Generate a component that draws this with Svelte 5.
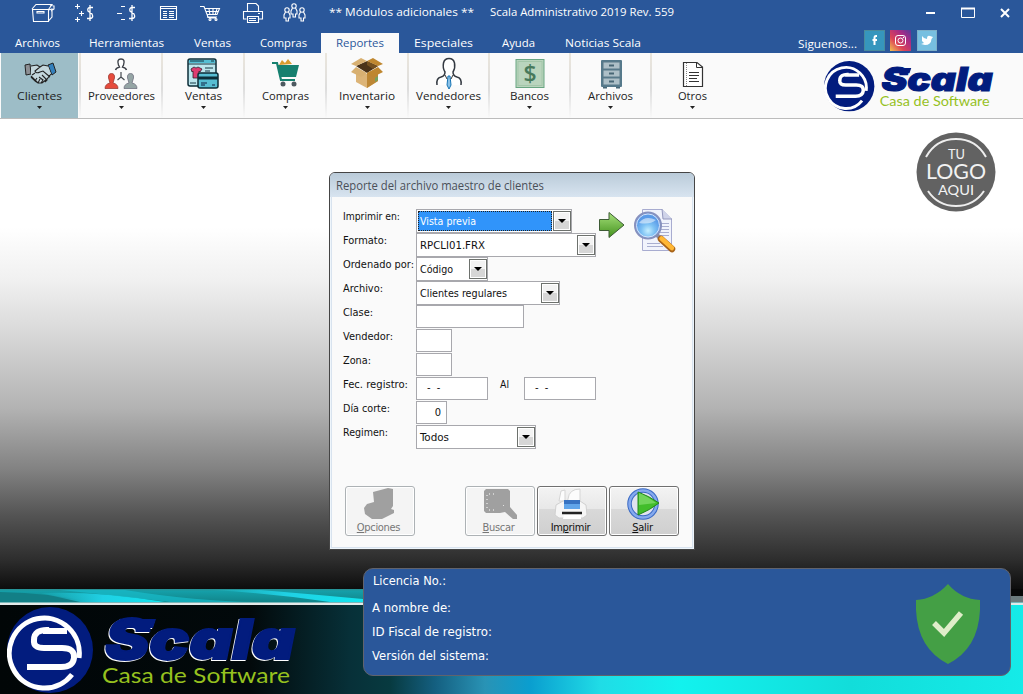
<script>
  const menus = [
    ['Archivos', 74, 45], ['Herramientas', 105, 75], ['Ventas', 67, 37], ['Compras', 75, 47],
    ['Reportes', 78, 48], ['Especiales', 89, 59], ['Ayuda', 61, 33], ['Noticias Scala', 108, 76]
  ];
  const tools = [
    ['Clientes', 'hands', 81, 45], ['Proveedores', 'tree', 82, 67], ['Ventas', 'card', 82, 37],
    ['Compras', 'cart', 82, 47], ['Inventario', 'box', 82, 56], ['Vendedores', 'man', 81, 65],
    ['Bancos', 'bank', 81, 39], ['Archivos', 'cabinet', 81, 45], ['Otros', 'doc', 81, 29]
  ];
  const rows = [
    { label: 'Imprimir en:', lw: 57, w: 156, value: 'Vista previa', vw: 56, combo: true, sel: true },
    { label: 'Formato:', lw: 44, w: 180, value: 'RPCLI01.FRX', vw: 65, combo: true },
    { label: 'Ordenado por:', lw: 71, w: 72, value: 'Código', vw: 33, combo: true },
    { label: 'Archivo:', lw: 40, w: 144, value: 'Clientes regulares', vw: 87, combo: true },
    { label: 'Clase:', lw: 30, w: 108 },
    { label: 'Vendedor:', lw: 50, w: 36 },
    { label: 'Zona:', lw: 28, w: 36 },
    { label: 'Fec. registro:', lw: 65, w: 72, date: true },
    { label: 'Día corte:', lw: 47, w: 31, num: true },
    { label: 'Regimen:', lw: 45, w: 120, value: 'Todos', vw: 29, combo: true }
  ];
</script>

{#snippet fit(t, w, size)}
  <svg class="fit" width={w} height="16" style:font-size="{size}px"><text x="0" y="12" textLength={w} lengthAdjust="spacingAndGlyphs">{t}</text></svg>
{/snippet}

{#snippet brand(w, outline)}
  <svg width={w} viewBox="0 0 292 88" class="brand">
    <circle cx="43" cy="43" r="43" fill="#021c7e" />
    <path d="M65 67.500A35 35 0 1 1 72 51" fill="none" stroke="#fff" stroke-width="5" />
    <path d="M60 24H36M42 23Q27 22 27 33Q26 41 37 41H55Q68 41 67 51Q66 60 54 60H20" fill="none" stroke="#fff" stroke-width="6" />
    <g class:outline font-family="Inter" font-weight="900" font-style="italic" font-size="55">
      <text x="98" y="52" textLength="190" lengthAdjust="spacingAndGlyphs" fill="#021c7e" stroke="#021c7e" stroke-width="1.800">Scala</text>
      <path d="M113 11L122 18L130 12H149L146 21H120Z" fill="#021c7e" />
    </g>
    <text x="95" y="76" textLength="188" lengthAdjust="spacingAndGlyphs" font-family="Lato" font-size="22" fill="#96c11f">Casa de Software</text>
  </svg>
{/snippet}

{#snippet toolIcon(n)}
  <svg class="ticon" width="34" height="34" viewBox="0 0 34 34">
    {#if n === 'hands'}
      <path d="M2 8L7 7L8 17L3 18Z" fill="#8d8f94" stroke="#222" />
      <path d="M25 8L30 6L33 15L29 18Z" fill="#3480bc" stroke="#222" />
      <path d="M8 9L14 8L17 10L20 8L25 9L28 17L24 22L19 26L15 26L8 19Z" fill="#c3d6dc" />
      <path d="M8 9L14 8L17 10L20 8L25 9M28 17L24 22L19 26L15 26L8 19M17 10L12 14Q13 17 17 15L20 14L27 20M9 18L12 16M8 20L12 24L14 21M12 24L15 26L17 22M18 26L20 23L16 20M22 25L24 23L19 18" fill="none" stroke="#222" stroke-width="1.100" />
    {:else if n === 'tree'}
      <path d="M11.500 13Q12 11 15.500 10L14.500 8Q12.500 2 17 2Q21.500 2 19.500 8L18.500 10Q22 11 22.500 13" fill="#fff" stroke="#3b3f46" stroke-width="1.400" />
      <path d="M17 15V21M17 20L13.500 23M17 20L20.500 23" stroke="#45494f" fill="none" stroke-width="1.200" />
      <path d="M1 31.500Q1 27 6 26L4.500 21Q4 16.500 7.500 16.500Q11 16.500 10.500 21L9 26Q14 27 14 31.500Z" fill="#e64b3c" stroke="#923129" stroke-width=".7" />
      <path d="M20 31.500Q20 27 25 26L23.500 21Q23 16.500 26.500 16.500Q30 16.500 29.500 21L28 26Q33 27 33 31.500Z" fill="#95a5a5" stroke="#667" stroke-width=".7" />
    {:else if n === 'card'}
      <rect x="2" y="2" width="28" height="27" rx="2" fill="#bce6ed" stroke="#0c2e38" stroke-width="1.500" />
      <path d="M3 6H29V3H3Z" fill="#55bfd4" /><path d="M2 7H30M4 4H18M25 4H28M19 11H27M19 14H24M4 26H10" stroke="#153742" />
      <path d="M5 12L8 10Q10 12 12 10L16 12L14 15L13 14V21H7V14L6 15Z" fill="#dd3c70" stroke="#36202f" stroke-width=".8" />
      <rect x="12" y="16" width="20" height="15" rx="2" fill="#57bed3" stroke="#0c2e38" stroke-width="1.500" />
      <path d="M12 21H32" stroke="#0c2e38" stroke-width="3" /><path d="M15 26H21M15 28H19M26 28H29" stroke="#124" />
    {:else if n === 'cart'}
      <path d="M11 8L14 3L17 6L20 2L24 7Z" fill="#d99c2f" />
      <path d="M4 6H9L13 23H27" fill="none" stroke="#168170" stroke-width="2.200" />
      <path d="M9 8H31L28 20H12Z" fill="#16806f" /><circle cx="15" cy="27" r="2.500" fill="#4d5960" /><circle cx="26" cy="27" r="2.500" fill="#4d5960" />
    {:else if n === 'box'}
      <path d="M6 12L17 17L28 12V24L17 31L6 25Z" fill="#dcb477" /><path d="M17 16L28 12V24L17 31Z" fill="#bd8735" />
      <path d="M6 9L17 4L28 9L17 16Z" fill="#4b3318" /><path d="M17 4L28 9L23 12L17 8Z" fill="#74501f" />
      <path d="M6 9L1 7L11 1L17 4ZM6 10L17 16L11 20L1 15Z" fill="#d8b071" /><path d="M17 4L23 1L33 7L28 9ZM28 10L17 16L23 20L33 15Z" fill="#bf872f" />
      <path d="M25 21L28 19V23L25 25Z" fill="#76a25b" />
    {:else if n === 'man'}
      <path d="M5 28Q4 21 9 20Q13 19 13 15Q10.500 11 11.500 6Q12.500 1.500 17 1.500Q21.500 1.500 22.500 6Q23.500 11 21 15Q21 19 25 20Q30 21 29 28" fill="#fff" stroke="#333941" stroke-width="1.500" />
      <path d="M16 19H18L19 28L17 32L15 28Z" fill="#8bc2e8" stroke="#1774b4" />
      <path d="M13 18L15 22M21 18L19 22" stroke="#333" />
    {:else if n === 'bank'}
      <rect x="3" y="2.500" width="28" height="28" fill="#b9d4bd" stroke="#68a581" /><rect x="5" y="4.500" width="24" height="24" fill="none" stroke="#a3c6a9" />
      <text x="17" y="25" text-anchor="middle" font-family="Open Sans" font-size="23" font-weight="600" fill="#47795b">$</text>
    {:else if n === 'cabinet'}
      <path d="M9 30H13M22 30H26" stroke="#486776" stroke-width="3" /><rect x="7" y="3" width="21" height="27" rx="1" fill="#55798b" />
      {#each [5, 13, 21] as y}<rect x="9" {y} width="17" height="7" fill="#adbfc7" stroke="#5b7b8a" /><path d="M15 {y + 3.500}H20" stroke="#486675" stroke-width="2" />{/each}
    {:else}
      <path d="M7.500 5.500H21L26.500 10V29.500H7.500Z" fill="#fff" stroke="#333" stroke-width="1.200" /><path d="M20.500 5V10.500H27" fill="none" stroke="#333" />
      <path d="M10.500 6V29" stroke="#888" stroke-dasharray="1 1" /><path d="M13 15.500H23M13 18.500H23M13 21.500H21M13 24.500H23" stroke="#333" />
    {/if}
  </svg>
{/snippet}

{#snippet combo(r)}
  <div class="field combo" style:width="{r.w}px">
    <div class="val" class:sel={r.sel}>{@render fit(r.value, r.vw, 11)}</div>
    <div class="dd"><svg width="8" height="4"><path d="M0 0H8L4 4Z" /></svg></div>
  </div>
{/snippet}

<div class="app">
  <header>
    <div class="quick">
      <svg class="qicons" width="320" height="26" fill="none" stroke="#fff" stroke-width="1.100">
        <path d="M32.500 9.500H48.500V21.500H33.500ZM32 9L36 4.500H52L48.500 9.500M48.500 21L52 17V9L48.500 10M37 11.500H44V13H37ZM50 5L54 6V9L51 11" />
        <path d="M75 6.500H80M77.500 4V9M79 13.500H84M81.500 11V16M75 19.500H80M77.500 17V22M117 13.500H122M121 6.500H125M121 19.500H125" />
        {#each [90, 132] as x}<path d="M{x + 3} 7.500H{x}Q{x - 3} 8 {x - 2} 11L{x + 2} 14Q{x + 4} 18 {x} 18.500H{x - 3}M{x} 5V21" stroke-width="1.300" />{/each}
        <path d="M160.500 6.500H176.500V19.500H160.500ZM160 8.500H177M163 11.500H167M169 11.500H174M163 13.500H167M169 13.500H174M163 15.500H167M169 15.500H174M163 17.500H167M169 17.500H174" />
        <path d="M200 6.500H204L208 17H217M205 8.500H219.500L217 14.500H207M206 11.500H218M209 9L210 15M213 9V15M217 9L215 15M207 17L210 18H216" /><circle cx="210" cy="19.500" r="1" /><circle cx="216" cy="19.500" r="1" />
        <path d="M247.500 11V3.500H256L258.500 6V11M246.500 19H243.500V11.500H262.500V19H259M247.500 16.500H258.500V22.500H247.500ZM249 18.500H256M249 20.500H256M258 13.500H260" />
        {#each [[287, 10], [294, 6], [302, 10]] as p}<circle cx={p[0]} cy={p[1]} r="2.200" /><path d="M{p[0] - 1.500} {p[1] + 2}L{p[0] - 3} {p[1] + 5}V{p[1] + 8}H{p[0] - 1}V{p[1] + 11}H{p[0] + 1.500}V{p[1] + 8}H{p[0] + 3}V{p[1] + 5}L{p[0] + 1.500} {p[1] + 2}" />{/each}
      </svg>
      <span class="modules">{@render fit('** Módulos adicionales **', 145, 11)}</span>
      <span class="title">{@render fit('Scala Administrativo 2019 Rev. 559', 184, 11)}</span>
      <svg class="win" width="90" height="20" fill="none" stroke="#fff"><path d="M3 10H12" stroke-width="2" /><path d="M38.500 5.500H51.500V14.500H38.500Z" /><path d="M38 5.500H52" stroke-width="2" /><path d="M78 6L86 14M86 6L78 14" stroke-width="2" /></svg>
    </div>
    <nav>
      {#each menus as m}
        <div class="tab" class:active={m[0] === 'Reportes'} style:width="{m[1]}px">{@render fit(m[0], m[2], 11)}</div>
      {/each}
      <div class="social">
        <span class="follow">{@render fit('Siguenos...', 59, 11)}</span>
        <svg width="73" height="21">
          <defs><linearGradient id="ig" x1="0" y1="1" x2="1" y2="0"><stop stop-color="#f2c451" /><stop offset=".35" stop-color="#dc4457" /><stop offset=".7" stop-color="#a72b86" /><stop offset="1" stop-color="#523c9c" /></linearGradient></defs>
          <rect width="20" height="20" x=".5" y=".5" fill="#3696bd" stroke="#498b9c" /><path d="M13 6H12Q10.500 6 10.500 8V15M8.500 10H13" fill="none" stroke="#fff" stroke-width="2" />
          <rect x="26" width="21" height="21" fill="url(#ig)" /><g fill="none" stroke="#fff"><rect x="31.500" y="5.500" width="10" height="10" rx="2.500" /><circle cx="36.500" cy="10.500" r="2.500" /></g><circle cx="39.500" cy="7.500" r=".7" fill="#fff" />
          <rect x="53.500" y=".5" width="19" height="20" fill="#77bfe0" stroke="#7db0c8" /><path d="M58 6Q60 9 63 9Q63 5 66 6L69 7L67.500 9Q67 15 61 15L57 14L60 13L58 11Z" fill="#fff" />
        </svg>
      </div>
    </nav>
  </header>

  <div class="toolbar">
    {#each tools as t, i}
      <div class="tool" class:on={i === 0} style:width="{t[2]}px">
        {@render toolIcon(t[1])}
        <div class="tl">{@render fit(t[0], t[3], 11)}</div>
        <svg class="tarrow" width="5" height="3"><path d="M0 0H5L2.500 3Z" /></svg>
      </div>
    {/each}
    <div class="toplogo">{@render brand(171, false)}</div>
  </div>

  <main>
    <svg class="yourlogo" width="80" height="80" viewBox="0 0 80 80">
      <circle cx="40" cy="40" r="39.500" fill="#626262" />
      <path d="M10 25Q20 7 40 7Q60 7 70 25M12 59Q22 74 40 74Q58 74 68 59" fill="none" stroke="#eee" stroke-width="2" />
      <g font-family="Lato" fill="#f2f2f2"><text x="32" y="27" font-size="14" textLength="17" lengthAdjust="spacingAndGlyphs">TU</text><text x="10" y="47" font-size="21" textLength="60" lengthAdjust="spacingAndGlyphs">LOGO</text><text x="22" y="63" font-size="14" textLength="36" lengthAdjust="spacingAndGlyphs">AQUI</text></g>
    </svg>

    <section class="dialog">
      <div class="dtitle">{@render fit('Reporte del archivo maestro de clientes', 208, 12)}</div>
      <div class="dbody">
        <div class="form">
          {#each rows as r}
            <div class="row">
              <div class="lbl">{@render fit(r.label, r.lw, 11)}</div>
              {#if r.combo}{@render combo(r)}
              {:else if r.date}
                <div class="field date" style:width="72px">-&nbsp; -</div>
                <div class="al">{@render fit('Al', 9, 11)}</div>
                <div class="field date" style:width="72px">-&nbsp; -</div>
              {:else}<div class="field" class:num={r.num} style:width="{r.w}px">{r.num ? '0' : ''}</div>{/if}
            </div>
          {/each}
        </div>
        <svg class="preview" width="82" height="50">
          <defs>
            <linearGradient id="ga" x2="0" y2="1"><stop stop-color="#a6e17b" /><stop offset="1" stop-color="#43911d" /></linearGradient>
            <radialGradient id="gl" cx=".5" cy=".7"><stop stop-color="#c5efff" /><stop offset=".5" stop-color="#7ec2f4" /><stop offset="1" stop-color="#5b9be8" /></radialGradient>
          </defs>
          <path d="M2.500 11.500H12V4.500L27 17L12 29.500V22.500H2.500Z" fill="url(#ga)" stroke="#3d5b35" />
          <path d="M45.500 1.500H65L74.500 11V42.500H45.500Z" fill="#f1f3fc" stroke="#a8acd0" /><path d="M65 1L66 11H75" fill="#cfd3e9" stroke="#9498bd" />
          <path d="M62 15.500H72M62 18.500H72M62 21.500H72M62 24.500H72M62 27.500H72M50 35.500H63M50 38.500H66" stroke="#a9aed0" />
          <circle cx="51" cy="17.500" r="13" fill="url(#gl)" stroke="#8791be" stroke-width="2" /><circle cx="51" cy="17.500" r="11.500" fill="none" stroke="#d6e3fa" />
          <path d="M42 15Q48 7 59 12Q53 17 42 15" fill="#fff" opacity=".5" />
          <path d="M60 27L64 31" stroke="#888da8" stroke-width="4" /><path d="M64 31L75 41" stroke="#a86318" stroke-width="6.500" stroke-linecap="round" /><path d="M64.500 30.500L75 40" stroke="#ffb735" stroke-width="4.500" stroke-linecap="round" />
        </svg>
        <div class="buttons">
          <button class="off opt"><svg width="38" height="34"><path d="M13 5L28 1L33 2V19L31 22L34 23V26L22 32L12 32L5 27L4 21L7 17L14 15Z" fill="#a0a0a0" /></svg><span><u>O</u>pciones</span></button>
          <button class="off"><svg width="38" height="34"><path d="M6 2H28L30 4V20L37 28V32H33L25 25L20 26H6L4 24V4Z" fill="#a0a0a0" /><path d="M7 8V23M9 7H15M9 23H14M23 19L25 17" stroke="#fff" stroke-dasharray="1 3" /></svg><span><u>B</u>uscar</span></button>
          <button><svg width="38" height="34"><path d="M9 4L13 3V14H7ZM16 12Q17 2 28 2V16H15Z" fill="#fcfcfc" stroke="#d5d5d5" /><path d="M4 18L11 14H28L34 18L35 28L31 31H7L3 28Z" fill="#f6f6f6" stroke="#d0d0d0" /><path d="M12 13H28V22H12Z" fill="#60a5ea" /><path d="M12 13H28V17H12Z" fill="#1d51a6" opacity=".6" /><path d="M10 26H30" stroke="#222" stroke-width="2.500" /><path d="M12 28H29V32H11Z" fill="#fff" /></svg><span>Im<u>p</u>rimir</span></button>
          <button><svg width="38" height="34"><circle cx="19" cy="17" r="13.500" fill="#e1e2ef" stroke="#3969c4" stroke-width="4.500" /><circle cx="19" cy="17" r="13.500" fill="none" stroke="#85a9ed" stroke-width="2.500" /><path d="M14 5Q25 9 35 16Q26 23 14 28Z" fill="#42bd2b" stroke="#23871b" /><path d="M15 6Q23 9 32 16L15 18Z" fill="#8ce176" opacity=".65" /></svg><span><u>S</u>alir</span></button>
        </div>
      </div>
    </section>

    <div class="bottom">
      <svg class="stripe" width="1023" height="16">
        <defs>
          <linearGradient id="teal" x2="0" y2="1"><stop stop-color="#2a8f92" /><stop offset=".15" stop-color="#159fa8" /><stop offset="1" stop-color="#118388" /></linearGradient>
          <linearGradient id="streak"><stop stop-color="#22cfe0" stop-opacity=".1" /><stop offset=".5" stop-color="#20d0e4" /><stop offset="1" stop-color="#13e5ee" /></linearGradient>
        </defs>
        <rect width="1023" height="14" fill="url(#teal)" />
        <path d="M0 3Q50 4 90 13H0Z" fill="#127f86" /><path d="M40 4Q100 2 165 13H80Z" fill="url(#streak)" />
        <path d="M60 1H125Q200 13 260 13H170Q120 7 60 1Z" fill="#18bccb" opacity=".7" />
        <path d="M210 1H260Q310 5 363 10V13H330Q270 4 210 1Z" fill="url(#streak)" />
        <rect x="1000" width="23" height="7" fill="#080808" /><rect x="1000" y="7" width="23" height="6" fill="#6c7a7c" />
        <rect y="13.500" width="1023" height="2.500" fill="#e3e9e9" />
      </svg>
      <div class="base"><div class="bigbrand">{@render brand(292, true)}</div></div>
    </div>

    <section class="license">
      <div class="info">
        <div class="first">{@render fit('Licencia No.:', 73, 12)}</div>
        <div>{@render fit('A nombre de:', 79, 12)}</div>
        <div>{@render fit('ID Fiscal de registro:', 120, 12)}</div>
        <div>{@render fit('Versión del sistema:', 117, 12)}</div>
      </div>
      <svg width="64" height="80"><path d="M32 0Q45 15 64 16Q66 63 32 80Q-2 63 0 16Q18 15 32 0Z" fill="#449f45" /><path d="M18 39L28 49L45 29" fill="none" stroke="#dfedc9" stroke-width="5.500" /></svg>
    </section>
  </main>
</div>

<style>
  :global(body) { margin: 0; }
  .app { width: 1023px; height: 694px; display: flex; flex-direction: column; overflow: hidden; background: #fff; font-family: "Open Sans", "Noto Sans", sans-serif; }
  svg { display: block; flex: none; }
  .fit { overflow: visible; fill: currentColor; }
  .outline { filter: drop-shadow(-1px 1.500px 0 #fff); }
  header { background: #2a579a; height: 53px; color: #fff; }
  .quick { height: 33px; display: flex; }
  .modules { margin: 4px 0 0 9px; }
  .title { margin: 4px 0 0 16px; }
  .win { margin: 3px 0 0 auto; padding-right: 10px; width: 90px; }
  nav { display: flex; height: 20px; }
  .tab { display: flex; justify-content: center; padding-top: 2px; box-sizing: border-box; }
  .active { background: #fafafa; color: #2a579a; }
  .social { display: flex; margin-left: 141px; margin-top: -3px; }
  .follow { padding: 6px 7px 0 0; }
  .toolbar { height: 65px; border-bottom: 1px solid #bcbcbc; background: #fafafa; display: flex; }
  .tool { box-sizing: border-box; height: 65px; display: flex; flex-direction: column; align-items: center; color: #222; padding: 4px 0 0; border-right: 2px solid; border-image: linear-gradient(#ebe6dc, #ddd 55%, #fafafa) 1; }
  .tool:nth-child(9) { border-image: none; border-color: transparent; padding-left: 2px; }
  .on { background: linear-gradient(90deg, #fafafa 1px, #9dbdc7 1px 78px, #fafafa 78px); background-clip: padding-box; }
  .tl { margin-top: -3px; height: 18px; }
  .tarrow { fill: #222; }
  .toplogo { margin: 8px 0 0 91px; }
  main { flex: 1; position: relative; display: flex; flex-direction: column; justify-content: flex-end; background: linear-gradient(#fff 0, #fff 108px, #f0f0f0 162px, #d8d8d8 215px, #b2b2b2 290px, #828282 350px, #545454 396px, #2e2e2e 440px, #0c0c0c 471px); }
  .yourlogo { position: absolute; left: 916px; top: 13px; }
  .dialog { position: absolute; left: 329px; top: 53px; width: 366px; height: 378px; box-sizing: border-box; border: 1px solid #454545; border-radius: 6px 6px 0 0; background: #d8e3ef; padding: 0 2px 2px; box-shadow: inset 0 0 0 1px #eef5fb; }
  .dtitle { height: 24px; margin: 0 -2px; padding: 5px 0 0 6px; box-sizing: border-box; border-radius: 5px 5px 0 0; color: #4a4f58; background: linear-gradient(#bacbd9, #d8e4f0); }
  .dbody { background: #fafafa; height: 350px; display: grid; grid-template-columns: 265px 1fr; grid-template-rows: 289px 1fr; }
  .form { padding: 12px 0 0 11px; display: flex; flex-direction: column; font-family: "DejaVu Sans Condensed", "DejaVu Sans", sans-serif; color: #111; font-size: 11px; }
  .row { height: 24px; display: flex; }
  .lbl { width: 73px; flex: none; margin-top: -1px; }
  .field { height: 23px; box-sizing: border-box; border: 1px solid #a8a8ad; background: #fff; flex: none; }
  .combo { height: 24px; display: flex; padding: 1px 0 1px 1px; }
  .val { flex: 1; padding: 2px 0 0 2px; margin-right: 1px; height: 18px; }
  .sel { background: #3094fa; color: #fff; outline: 1px dotted #222; outline-offset: -1px; }
  .dd { box-sizing: border-box; width: 18px; height: 20px; border: 1px solid #6d716d; box-shadow: inset 0 0 0 1px #fff; background: linear-gradient(#f3f3f3 50%, #d6d6d6 50%); display: grid; place-items: center; }
  .num { text-align: right; padding: 4px 5px 0 0; }
  .date { padding: 3px 0 0 10px; }
  .al { width: 24px; margin: -1px 0 0 12px; }
  .preview { margin: 11px 0 0 0; }
  .buttons { grid-column: 1 / 3; display: flex; gap: 2px; padding-left: 13px; }
  button { width: 70px; height: 50px; box-sizing: border-box; border: 1px solid #707070; border-radius: 3px; padding: 0 3px 0 0; display: flex; flex-direction: column; align-items: center; background: linear-gradient(#f3f3f3 0, #e8e8e8 45%, #d9d9d9 46%, #cfcfcf); box-shadow: inset 0 0 0 1px #fff; font-family: "DejaVu Sans Condensed", "DejaVu Sans", sans-serif; font-size: 11px; letter-spacing: -.3px; line-height: 13px; color: #111; }
  button span { height: 13px; }
  .off { background: #f4f4f4; border-color: #adb2b5; color: #777; }
  .opt { margin-right: 48px; }
  .bottom { height: 105px; }
  .base { height: 89px; background: linear-gradient(90deg, #010607, #02090b 250px, #073038 350px, #073a40 390px, #145f80 435px, #2993b5 485px, #0a9ecf 530px, #20dce6 600px, #12f2ee 680px, #12ddda 850px, #15ebe8); }
  .bigbrand { padding: 2px 0 0 7px; }
  .license { position: absolute; left: 363px; top: 449px; width: 648px; height: 108px; box-sizing: border-box; border: 1px solid #61636c; border-radius: 10px; background: #2a579a; color: #fff; display: flex; justify-content: space-between; padding: 15px 30px 0 8px; font-family: "DejaVu Sans", sans-serif; }
  .info { margin-top: -11px; }
  .info div { height: 24px; }
  .info .first { height: 27px; padding-left: 1px; }
</style>
